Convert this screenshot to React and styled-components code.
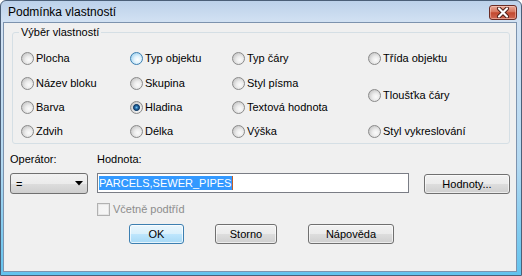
import React from 'react';
import styled, { createGlobalStyle } from 'styled-components';

const Global = createGlobalStyle`
  html, body { margin: 0; padding: 0; background: #ffffff; overflow: hidden; }
  * { box-sizing: border-box; }
`;

const Window = styled.div`
  width: 522px;
  height: 276px;
  border: 1px solid #4b5f78;
  border-radius: 6px 6px 0 0;
  background: linear-gradient(180deg, #bcd1ea 0px, #d3e2f3 22px, #b2d8f1 60%, #62c3ee 100%);
  padding: 0 4px 3px 2px;
  display: flex;
  flex-direction: column;
  font-family: "Liberation Sans", Arial, sans-serif;
  color: #000;
`;

const TitleBar = styled.div`
  height: 21px;
  display: flex;
  align-items: flex-start;
  justify-content: space-between;
  padding-left: 5px;
`;

const Title = styled.span`
  font-size: 12px;
  line-height: 15px;
  margin-top: 4px;
  color: #000;
`;

const CloseButton = styled.div`
  width: 28px;
  height: 15px;
  margin-top: 4px;
  border: 1px solid #6b2c25;
  border-radius: 3px;
  background: linear-gradient(180deg, #e9a796 0%, #d7765f 45%, #c2482f 52%, #cf6651 100%);
  box-shadow: inset 0 0 0 1px rgba(255, 220, 210, 0.45);
  display: flex;
  align-items: center;
  justify-content: center;
`;

const Client = styled.div`
  flex: 1;
  border: 1px solid #7d93ae;
  background: #f0f0f0;
  display: flex;
  flex-direction: column;
  font-size: 11px;
`;

const GroupBox = styled.fieldset`
  margin: 3px 6px 0 8px;
  padding: 6px 0 0 8px;
  border: 1px solid #d5dfe5;
  border-radius: 3px;
  min-width: 0;
`;

const Legend = styled.legend`
  padding: 0 2px;
  margin-left: -2px;
  font-size: 11px;
  line-height: 13px;
`;

const RadioGrid = styled.div`
  display: grid;
  grid-template-columns: 109px 102px 136px 1fr;
  grid-template-rows: 26px 24px 24px 24px;
`;

const RadioItem = styled.label`
  grid-column: ${p => p.$col};
  grid-row: ${p => p.$row};
  display: flex;
  align-items: center;
  gap: 2px;
  font-size: 11px;
  line-height: 13px;
  white-space: nowrap;
`;

const baseFill = 'radial-gradient(circle at 62% 62%, #fbfbfb 0%, #ececec 35%, #cfcfcf 70%, #b9b9b9 100%)';
const hotFill = 'radial-gradient(circle at 60% 60%, #ffffff 0%, #e3f3fc 35%, #a9d6f1 75%, #8cc4e8 100%)';
const dot = 'radial-gradient(circle at 50% 50%, #6fc4f2 0px, #2a6fab 1.5px, #0e3b68 2.8px, #3d5f80 3.3px, transparent 3.8px)';

const RadioMark = styled.span`
  width: 13px;
  height: 13px;
  flex: none;
  border-radius: 50%;
  border: 1px solid ${p => (p.$hot ? '#3c7fb1' : '#8a8a8a')};
  background: ${p => (p.$checked ? `${dot}, ${baseFill}` : p.$hot ? hotFill : baseFill)};
`;

const FormGrid = styled.div`
  margin: 9px 6px 0 6px;
  display: grid;
  grid-template-columns: 78px 318px 86px;
  grid-template-rows: 16px 21px 22px 20px;
  column-gap: 9px;
  row-gap: 4px;
`;

const FieldLabel = styled.span`
  grid-column: ${p => p.$col};
  grid-row: 1;
  align-self: start;
  font-size: 11px;
  line-height: 13px;
`;

const Combo = styled.div`
  grid-column: 1;
  grid-row: 2;
  height: 21px;
  border: 1px solid #707070;
  border-radius: 3px;
  background: linear-gradient(180deg, #f2f2f2 0%, #ebebeb 50%, #dddddd 51%, #cfcfcf 100%);
  display: flex;
  align-items: center;
  justify-content: space-between;
  padding: 0 4px 0 5px;
  font-size: 11px;
`;

const TextInput = styled.div`
  grid-column: 2;
  grid-row: 2;
  align-self: start;
  width: 312px;
  height: 20px;
  border: 1px solid #7a7d85;
  background: #ffffff;
  padding: 1px 1px;
  display: flex;
  align-items: center;
`;

const Selected = styled.span`
  background: #3399ff;
  color: #ffffff;
  font-size: 11px;
  line-height: 14px;
  padding-right: 1px;
  border-right: 1px solid #c0602a;
`;

const Button = styled.button`
  height: 20px;
  width: ${p => p.$w}px;
  padding: 0;
  font-family: "Liberation Sans", Arial, sans-serif;
  font-size: 11px;
  color: #000;
  border-radius: 3px;
  border: 1px solid ${p => (p.$default ? '#3c7fb1' : '#707070')};
  background: ${p =>
    p.$default
      ? 'linear-gradient(180deg, #eaf6fd 0%, #d9f0fc 50%, #bee6fd 51%, #a7d9f5 100%)'
      : 'linear-gradient(180deg, #f2f2f2 0%, #ebebeb 50%, #dddddd 51%, #cfcfcf 100%)'};
  box-shadow: inset 0 0 0 1px ${p => (p.$default ? 'rgba(255,255,255,0.7)' : 'rgba(255,255,255,0.6)')};
`;

const SideButton = styled(Button)`
  grid-column: 3;
  grid-row: 2;
  align-self: end;
`;

const CheckRow = styled.label`
  grid-column: 2;
  grid-row: 3;
  display: flex;
  align-items: center;
  gap: 3px;
  color: #8d8d8d;
  font-size: 11px;
  line-height: 13px;
`;

const CheckMark = styled.span`
  width: 13px;
  height: 13px;
  flex: none;
  border: 1px solid #b1b1b1;
  background: linear-gradient(135deg, #f2f2f2 0%, #f7f7f7 100%);
  box-shadow: inset 0 0 0 1px #e6e6e6;
`;

const ButtonRow = styled.div`
  grid-column: 1 / -1;
  grid-row: 4;
  display: flex;
  gap: 31px;
  padding-left: 119px;
`;

const radios = [
  { label: 'Plocha', col: 1, row: '1' },
  { label: 'Název bloku', col: 1, row: '2' },
  { label: 'Barva', col: 1, row: '3' },
  { label: 'Zdvih', col: 1, row: '4' },
  { label: 'Typ objektu', col: 2, row: '1', hot: true },
  { label: 'Skupina', col: 2, row: '2' },
  { label: 'Hladina', col: 2, row: '3', checked: true },
  { label: 'Délka', col: 2, row: '4' },
  { label: 'Typ čáry', col: 3, row: '1' },
  { label: 'Styl písma', col: 3, row: '2' },
  { label: 'Textová hodnota', col: 3, row: '3' },
  { label: 'Výška', col: 3, row: '4' },
  { label: 'Třída objektu', col: 4, row: '1' },
  { label: 'Tloušťka čáry', col: 4, row: '2 / 4' },
  { label: 'Styl vykreslování', col: 4, row: '4' },
];

export default function App() {
  return (
    <>
      <Global />
      <Window>
        <TitleBar>
          <Title>Podmínka vlastností</Title>
          <CloseButton>
            <svg width="14" height="11" viewBox="0 0 14 11">
              <path d="M3 1.5 L11 9.5 M11 1.5 L3 9.5" stroke="#4a1c16" strokeWidth="4" strokeLinecap="round" />
              <path d="M3 1.5 L11 9.5 M11 1.5 L3 9.5" stroke="#ffffff" strokeWidth="2.2" strokeLinecap="round" />
            </svg>
          </CloseButton>
        </TitleBar>
        <Client>
          <GroupBox>
            <Legend>Výběr vlastností</Legend>
            <RadioGrid>
              {radios.map(r => (
                <RadioItem key={r.label} $col={r.col} $row={r.row}>
                  <RadioMark $hot={r.hot} $checked={r.checked} />
                  {r.label}
                </RadioItem>
              ))}
            </RadioGrid>
          </GroupBox>
          <FormGrid>
            <FieldLabel $col={1}>Operátor:</FieldLabel>
            <FieldLabel $col={2}>Hodnota:</FieldLabel>
            <Combo>
              <span>=</span>
              <svg width="8" height="5" viewBox="0 0 8 5">
                <polygon points="0,0 8,0 4,4.5" fill="#000" />
              </svg>
            </Combo>
            <TextInput>
              <Selected>PARCELS,SEWER_PIPES</Selected>
            </TextInput>
            <SideButton $w={86}>Hodnoty...</SideButton>
            <CheckRow>
              <CheckMark />
              Včetně podtříd
            </CheckRow>
            <ButtonRow>
              <Button $w={55} $default>OK</Button>
              <Button $w={62}>Storno</Button>
              <Button $w={86}>Nápověda</Button>
            </ButtonRow>
          </FormGrid>
        </Client>
      </Window>
    </>
  );
}
